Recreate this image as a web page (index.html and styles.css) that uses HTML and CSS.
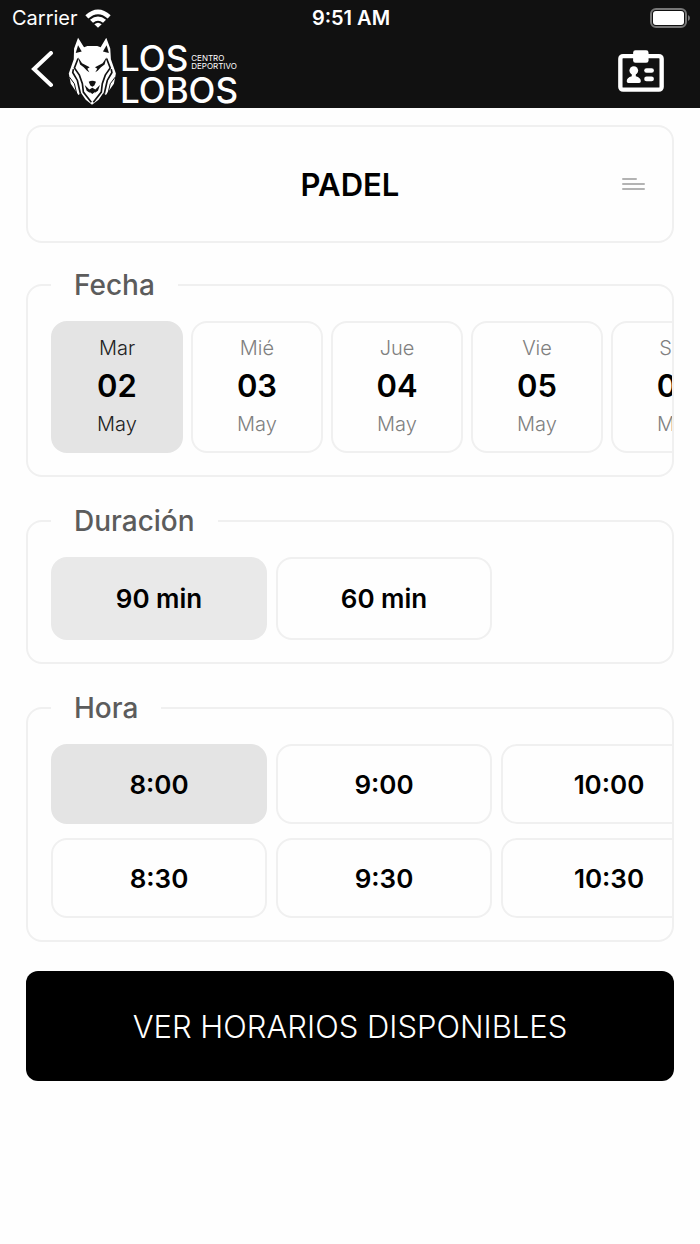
FILE: index.html
```html
<!DOCTYPE html>
<html lang="es">
<head>
  <meta charset="utf-8">
  <meta name="viewport" content="width=device-width, initial-scale=1">
  <title>Los Lobos - Padel</title>
  <link rel="stylesheet" href="styles.css">
</head>
<body>
  <header class="header">
    <div class="status-bar">
      <div class="carrier">
        <span>Carrier</span>
        <svg class="wifi" viewBox="0 0 78 56" aria-hidden="true">
          <path d="M1 18 Q39 -16 77 18 L68 28 Q39 2 10 28 Z"/>
          <path d="M15 32 Q39 12 63 32 L54 41 Q39 28 24 41 Z"/>
          <path d="M28 45 Q39 36 50 45 L39 56 Z"/>
        </svg>
      </div>
      <span class="time">9:51 AM</span>
      <svg class="battery" viewBox="0 0 40 20" aria-hidden="true">
        <rect x="1" y="1" width="35" height="18" rx="5" fill="none" stroke="#777" stroke-width="2"/>
        <rect x="3" y="3" width="31" height="14" rx="3" fill="#fff"/>
        <path d="M38 7 Q40 8 40 10 Q40 12 38 13 Z" fill="#777"/>
      </svg>
    </div>

    <nav class="nav">
      <button class="icon-button back" aria-label="Volver">
        <svg viewBox="0 0 24 40"><path d="M20 2 L3 18 L20 34"/></svg>
      </button>
      <a class="logo" href="#">
        <svg class="wolf" viewBox="20 15 144 205" aria-hidden="true">
          <path fill="#fff" d="M50 17 L68 46 L78 42 H108 L118 46 L135 17 L147 50 L149 82 L164 125 L158 156 L134 190 L126 184 L112 204 L92 219 L73 204 L59 184 L51 190 L28 156 L22 125 L37 82 L38 50 Z"/>
          <g fill="#111">
            <path d="M50 40 L43 63 L61 59 Z"/>
            <path d="M136 40 L143 63 L125 59 Z"/>
            <path d="M50 76 L62 94 L85 106 L78 111 L84 121 L77 117 L67 106 L56 98 Z"/>
            <path d="M136 76 L124 94 L101 106 L108 111 L102 121 L109 117 L119 106 L130 98 Z"/>
            <path d="M82 150 Q93 144 104 150 L99 161 L93 165 L87 161 Z"/>
            <path d="M70 160 L84 173 L93 168 L102 173 L116 160 L110 177 L93 188 L76 177 Z"/>
          </g>
          <g fill="none" stroke="#111" stroke-width="5">
            <path d="M50 80 L39 108 L54 130 L63 156 L66 181 L90 212"/>
            <path d="M136 80 L147 108 L132 130 L123 156 L120 181 L96 212"/>
            <path d="M36 112 L34 122 L48 146 L57 186"/>
            <path d="M150 112 L152 122 L138 146 L129 186"/>
          </g>
          <g fill="none" stroke="#111" stroke-width="3">
            <path d="M24 136 L39 156 L46 186"/>
            <path d="M162 136 L147 156 L140 186"/>
          </g>
          <path fill="#fff" d="M84 180 L93 187 L102 180 L93 200 Z"/>
        </svg>
        <span class="logo-text">
          <span class="logo-row">LOS <small>CENTRO<br>DEPORTIVO</small></span>
          <span class="logo-row">LOBOS</span>
        </span>
      </a>
      <button class="icon-button badge" aria-label="Mi carnet">
        <svg viewBox="54 151 137 125">
          <rect x="61" y="169" width="123" height="100" rx="8" fill="none" stroke="#fff" stroke-width="13"/>
          <rect x="99" y="152" width="46" height="37" rx="7" fill="#fff"/>
          <g fill="#fff">
            <circle cx="101" cy="212" r="13"/>
            <path d="M95 220 H107 V229 Q122 233 122 244 Q122 249 117 249 H85 Q80 249 80 244 Q80 233 95 229 Z"/>
            <rect x="132" y="205" width="29" height="14" rx="7"/>
            <rect x="132" y="230" width="29" height="14" rx="7"/>
          </g>
        </svg>
      </button>
    </nav>
  </header>

  <main class="content">
    <button class="card sport">
      <span class="sport-name">PADEL</span>
      <svg class="menu-icon" viewBox="0 0 23 14" aria-hidden="true">
        <path d="M1 2 H14 M1 7 H22 M1 12 H22"/>
      </svg>
    </button>

    <fieldset class="card group">
      <legend>Fecha</legend>
      <div class="scroller dates">
        <button class="tile date selected" aria-pressed="true"><span>Mar</span><strong>02</strong><span>May</span></button>
        <button class="tile date"><span>Mié</span><strong>03</strong><span>May</span></button>
        <button class="tile date"><span>Jue</span><strong>04</strong><span>May</span></button>
        <button class="tile date"><span>Vie</span><strong>05</strong><span>May</span></button>
        <button class="tile date"><span>Sáb</span><strong>06</strong><span>May</span></button>
      </div>
    </fieldset>

    <fieldset class="card group">
      <legend>Duración</legend>
      <div class="scroller">
        <button class="tile duration selected" aria-pressed="true">90 min</button>
        <button class="tile duration">60 min</button>
      </div>
    </fieldset>

    <fieldset class="card group">
      <legend>Hora</legend>
      <div class="scroller hours">
        <button class="tile hour selected" aria-pressed="true">8:00</button>
        <button class="tile hour">8:30</button>
        <button class="tile hour">9:00</button>
        <button class="tile hour">9:30</button>
        <button class="tile hour">10:00</button>
        <button class="tile hour">10:30</button>
      </div>
    </fieldset>

    <button class="submit">VER HORARIOS DISPONIBLES</button>
  </main>
</body>
</html>
```

FILE: styles.css
```css
* {
  box-sizing: border-box;
}

body {
  margin: 0;
  background: #fefefe;
  color: #000;
  font-family: Inter, "Liberation Sans", sans-serif;
  font-size: 20px;
}

button {
  margin: 0;
  padding: 0;
  border: none;
  background: none;
  color: inherit;
  font: inherit;
  cursor: pointer;
}

svg {
  display: block;
}

/* Header */

.header {
  background: #111;
  color: #fff;
}

.status-bar {
  display: grid;
  grid-template-columns: 1fr auto 1fr;
  align-items: center;
  height: 36px;
  padding: 0 10px 0 12px;
}

.carrier {
  display: flex;
  align-items: center;
  gap: 7px;
}

.wifi {
  width: 26px;
  height: 19px;
  fill: #fff;
}

.time {
  font-weight: 600;
}

.battery {
  width: 40px;
  height: 20px;
  justify-self: end;
}

.nav {
  display: flex;
  align-items: center;
  height: 72px;
  padding: 0 36px 2px 31px;
}

.back svg {
  width: 24px;
  height: 40px;
  fill: none;
  stroke: #fff;
  stroke-width: 4;
  stroke-linecap: round;
}

.logo {
  display: flex;
  align-items: center;
  gap: 4px;
  margin-left: 13px;
  color: #fff;
  text-decoration: none;
}

.wolf {
  width: 48px;
  height: 68px;
}

.logo-text {
  padding-top: 6px;
  font-size: 35px;
  font-weight: 500;
  line-height: 32px;
}

.logo-row {
  display: flex;
  align-items: center;
  gap: 3px;
}

.logo small {
  padding-top: 8px;
  font-size: 8px;
  font-weight: 400;
  line-height: 8px;
}

.badge {
  margin-left: auto;
}

.badge svg {
  width: 46px;
  height: 42px;
}

/* Booking form */

.content {
  display: flex;
  flex-direction: column;
  padding: 17px 26px;
}

.card {
  border: 2px solid #f0f0f0;
  border-radius: 16px;
}

.sport {
  display: grid;
  grid-template-columns: 1fr auto 1fr;
  align-items: center;
  height: 118px;
  padding: 0 27px;
}

.sport-name {
  grid-column: 2;
  font-size: 31px;
  font-weight: 600;
}

.menu-icon {
  width: 23px;
  height: 14px;
  justify-self: end;
  fill: none;
  stroke: #b3b3b3;
  stroke-width: 2;
  stroke-linecap: round;
}

.group {
  min-width: 0;
  margin: 26px 0 0;
  padding: 0 0 22px;
}

.group + .group {
  margin-top: 28px;
}

legend {
  margin-left: 23px;
  padding: 0 23px;
  color: #5c5c5c;
  font-size: 28px;
  font-weight: 500;
  line-height: 32px;
}

.scroller {
  display: flex;
  gap: 9px;
  padding: 20px 0 0 23px;
  overflow-x: auto;
  scrollbar-width: none;
}

.dates {
  gap: 8px;
}

.hours {
  display: grid;
  grid-template-rows: auto auto;
  grid-auto-flow: column;
  justify-content: start;
  row-gap: 14px;
}

.tile {
  flex: none;
  border: 2px solid #f0f0f0;
  border-radius: 16px;
  font-size: 26px;
  font-weight: 600;
}

.tile.selected {
  border-color: #e4e4e4;
  background: #e4e4e4;
}

.date {
  display: flex;
  flex-direction: column;
  align-items: center;
  justify-content: center;
  width: 132px;
  height: 132px;
  padding-bottom: 2px;
  color: #808080;
  font-size: 20px;
  font-weight: 300;
  line-height: 32px;
}

.date strong {
  color: #000;
  font-size: 31px;
  font-weight: 600;
  line-height: 44px;
}

.date.selected {
  color: #222;
}

.duration {
  width: 216px;
  height: 83px;
}

.duration.selected {
  border-color: #e9e9e9;
  background: #e9e9e9;
}

.hour {
  width: 216px;
  height: 80px;
}

.submit {
  height: 110px;
  margin-top: 29px;
  border-radius: 12px;
  background: #000;
  color: #fff;
  font-size: 31px;
  font-weight: 300;
}
```
